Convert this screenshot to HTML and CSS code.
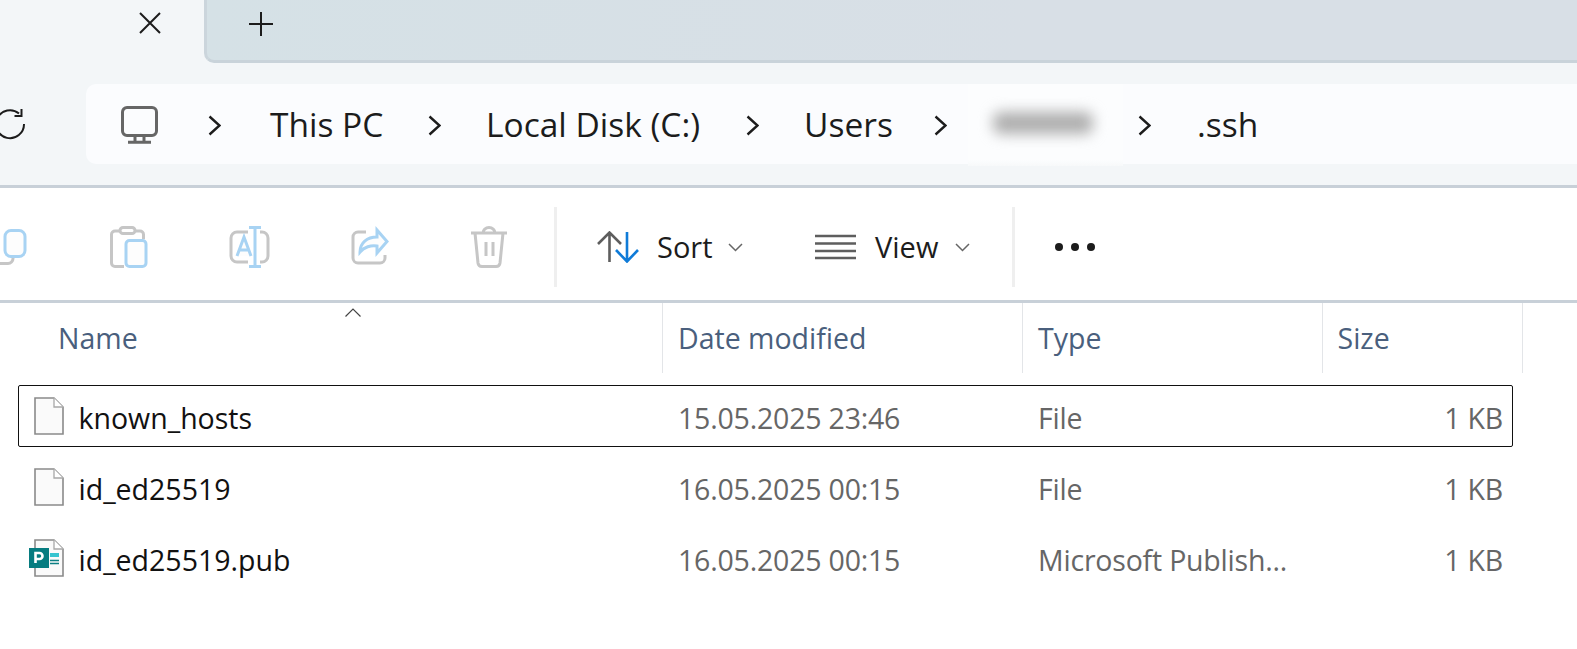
FILE: index.html
```html
<!DOCTYPE html>
<html lang="en">
<head>
<meta charset="utf-8">
<title>.ssh - File Explorer</title>
<link rel="stylesheet" href="styles.css">
</head>
<body>
<div class="window">
  <header class="tabbar">
    <div class="tab">
      <svg class="tab-close" width="22" height="22" viewBox="0 0 22 22"><path d="M1 1l20 20M21 1L1 21" class="ink"/></svg>
    </div>
    <div class="strip">
      <svg class="tab-new" width="24" height="24" viewBox="0 0 24 24"><path d="M0 12h24M12 0v24" class="ink"/></svg>
    </div>
  </header>

  <nav class="addressrow">
    <svg class="refresh" width="30" height="32" viewBox="0 0 30 32"><path d="M27 16A14 14 0 1 1 22 5.500M24.500 1v7h-7" class="ink"/></svg>
    <div class="address">
      <svg width="37" height="38" viewBox="0 0 37 38"><path d="M6 1.500h25a4.500 4.500 0 0 1 4.500 4.500v19a4.500 4.500 0 0 1-4.500 4.500H6A4.500 4.500 0 0 1 1.500 25V6A4.500 4.500 0 0 1 6 1.500zM14 30v6M23 30v6M7 36.200h23" class="monitor"/></svg>
      <svg class="chev" width="13" height="21" viewBox="0 0 13 21"><path d="M1.500 1.500l10 9-10 9" class="ink-bold"/></svg>
      <span class="crumb">This PC</span>
      <svg class="chev" width="13" height="21" viewBox="0 0 13 21"><path d="M1.500 1.500l10 9-10 9" class="ink-bold"/></svg>
      <span class="crumb">Local Disk (C:)</span>
      <svg class="chev" width="13" height="21" viewBox="0 0 13 21"><path d="M1.500 1.500l10 9-10 9" class="ink-bold"/></svg>
      <span class="crumb">Users</span>
      <svg class="chev" width="13" height="21" viewBox="0 0 13 21"><path d="M1.500 1.500l10 9-10 9" class="ink-bold"/></svg>
      <div class="redacted"><div class="smudge"></div></div>
      <svg class="chev" width="13" height="21" viewBox="0 0 13 21"><path d="M1.500 1.500l10 9-10 9" class="ink-bold"/></svg>
      <span class="crumb">.ssh</span>
    </div>
  </nav>

  <div class="toolbar">
    <svg class="tool tool-copy" width="27" height="36" viewBox="0 0 27 36"><path d="M13 27.500v2a5 5 0 0 1-5 5H-6" class="dim"/><rect x="5" y="1.500" width="20" height="26" rx="6" class="dimblue"/></svg>
    <svg class="tool tool-paste" width="38" height="42" viewBox="0 0 38 42"><path d="M10 5H5a3.500 3.500 0 0 0-3.500 3.500V37A3.500 3.500 0 0 0 5 40.500h9M26 5h4a3.500 3.500 0 0 1 3.500 3.500V13" class="dim"/><rect x="10" y="1.500" width="15" height="6" rx="3" class="dim"/><rect x="16" y="14.500" width="20" height="26" rx="3.500" class="dimblue"/></svg>
    <svg class="tool tool-rename" width="41" height="42" viewBox="0 0 41 42"><path d="M19 6H8a6 6 0 0 0-6 6v18a6 6 0 0 0 6 6h11M31 6h2a6 6 0 0 1 6 6v18a6 6 0 0 1-6 6h-2" class="dim"/><path d="M20 1.500h12M20 40.500h12M26 1.500v39M8 30L15 11l7 19M10.500 24h9" class="dimblue"/></svg>
    <svg class="tool tool-share" width="38" height="37" viewBox="0 0 38 37"><path d="M15 4H7a5 5 0 0 0-5 5v21a5 5 0 0 0 5 5h22a5 5 0 0 0 5-5v-3" class="dim"/><path d="M26 2l10 11.500L26 25v-7c-6-1-13 1-17 6 0-9 7-15 17-15z" class="dimblue"/></svg>
    <svg class="tool tool-trash" width="38" height="42" viewBox="0 0 38 42"><path d="M1 7h36M13 7a6 5.500 0 0 1 12 0M5 7l3 30a4 4 0 0 0 4 3.500h14a4 4 0 0 0 4-3.500l3-30M16 16v14M23 16v14" class="dim"/></svg>
    <div class="sep"></div>
    <svg class="sort-icon" width="44" height="32" viewBox="0 0 44 32"><path d="M12.500 31V2M1 13L12.500 1.500 24 13" class="gray"/><path d="M30 1v29M19 19l11 11.500L41 19" class="blue"/></svg>
    <span class="tool-label label-sort">Sort</span>
    <svg class="caret" width="15" height="9" viewBox="0 0 15 9"><path d="M1 1l6.500 6.500L14 1" class="gray-thin"/></svg>
    <svg class="view-icon" width="41" height="26" viewBox="0 0 41 26"><path d="M0 2h41M0 9.500h41M0 17h41M0 24h41" class="gray"/></svg>
    <span class="tool-label label-view">View</span>
    <svg class="caret" width="15" height="9" viewBox="0 0 15 9"><path d="M1 1l6.500 6.500L14 1" class="gray-thin"/></svg>
    <div class="sep sep-2"></div>
    <svg class="dots" width="40" height="8" viewBox="0 0 40 8"><circle cx="4" cy="4" r="4"/><circle cx="20" cy="4" r="4"/><circle cx="36" cy="4" r="4"/></svg>
  </div>

  <section class="list">
    <div class="columns">
      <svg class="sort-mark" width="16" height="9" viewBox="0 0 16 9"><path d="M.5 8.500L8 1l7.500 7.500" class="mark"/></svg>
      <div class="col col-name">Name</div>
      <div class="col">Date modified</div>
      <div class="col">Type</div>
      <div class="col">Size</div>
    </div>

    <div class="rows">
      <div class="row row-focus">
        <svg class="file" width="30" height="38" viewBox="0 0 30 38"><path d="M1 1h19l9 9v27H1z" class="page"/><path d="M20 1v9h9" class="fold"/></svg>
        <span class="fname">known_hosts</span>
        <span class="meta">15.05.2025 23:46</span>
        <span class="meta">File</span>
        <span class="meta size">1 KB</span>
      </div>
      <div class="row">
        <svg class="file" width="30" height="38" viewBox="0 0 30 38"><path d="M1 1h19l9 9v27H1z" class="page"/><path d="M20 1v9h9" class="fold"/></svg>
        <span class="fname">id_ed25519</span>
        <span class="meta">16.05.2025 00:15</span>
        <span class="meta">File</span>
        <span class="meta size">1 KB</span>
      </div>
      <div class="row">
        <svg class="file file-pub" width="35" height="38" viewBox="0 0 35 38"><path d="M6 1h19l9 9v27H6z" class="page"/><path d="M25 1v9h9" class="fold"/><rect x="21" y="14" width="9" height="4" class="pub-a"/><path d="M21 21.500h9M21 24.500h9" class="pub-b"/><rect x="0" y="9" width="20" height="20" class="pub-c"/><path d="M6.500 24V14h4a3 3 0 0 1 0 6h-4" class="pub-p"/></svg>
        <span class="fname">id_ed25519.pub</span>
        <span class="meta">16.05.2025 00:15</span>
        <span class="meta">Microsoft Publish...</span>
        <span class="meta size">1 KB</span>
      </div>
    </div>
  </section>
</div>
</body>
</html>
```
FILE: styles.css
```css
* { box-sizing: border-box; }
html, body { margin: 0; height: 100%; background: #fff; overflow: hidden; }
body { font-family: "Open Sans", "Noto Sans", sans-serif; color: #1a1a1a; }
.window { width: 1577px; height: 649px; overflow: hidden; }

svg { display: block; fill: none; }
.ink { stroke: #1c1c1c; stroke-width: 2; fill: none; }
.ink-bold { stroke: #1c1c1c; stroke-width: 2.4; fill: none; }
.monitor { stroke: #666; stroke-width: 3; fill: none; }
.dim { stroke: #c6c6c6; stroke-width: 3; fill: none; }
.dimblue { stroke: #a8d3f3; stroke-width: 3; fill: #fdfdfd; }
.gray { stroke: #5e5e5e; stroke-width: 2.6; fill: none; }
.blue { stroke: #0f7bd8; stroke-width: 2.6; fill: none; }
.gray-thin { stroke: #666; stroke-width: 1.5; fill: none; }
.mark { stroke: #444; stroke-width: 1.2; fill: none; }

/* Tab strip */
.tabbar { display: flex; height: 63px; background: #f3f6f8; }
.tab { width: 204px; padding: 12px 0 0 139px; flex: none; }
.strip {
  flex: 1;
  padding: 12px 0 0 42px;
  background: linear-gradient(100deg, #d5e1e6, #d8dfe6 60%);
  border-left: 3px solid #cbd5dc;
  border-bottom: 3px solid #c9d3da;
  border-bottom-left-radius: 10px;
}

/* Address row */
.addressrow {
  display: flex;
  align-items: center;
  height: 125px;
  background: #f3f6f8;
  border-bottom: 3px solid #c8d0d8;
}
.refresh { flex: none; margin-left: -3px; width: 30px; margin-right: 59px; }
.address {
  flex: 1;
  height: 80px;
  background: #fbfcfe;
  border-radius: 10px 0 0 10px;
  display: grid;
  grid-template-columns: 87px 62px 158px 58px 260px 58px 130px 34px 170px 59px 1fr;
  align-items: center;
  padding: 0 0 4px 35px;
}
.crumb { font-size: 33.500px; line-height: 44px; color: #1c1c1c; white-space: nowrap; margin-bottom: 2px; }
.redacted {
  align-self: start;
  height: 82px;
  width: 155px;
  background: linear-gradient(#fcfdfe 92%, #f7f9fa);
  display: flex;
  align-items: center;
  justify-content: center;
  padding: 0 6px 4px 0;
}
.smudge { width: 100px; height: 22px; background: #aeaeae; filter: blur(7px); border-radius: 8px; }

/* Command bar */
.toolbar {
  display: flex;
  align-items: center;
  height: 115px;
  border-bottom: 3px solid #c8d0d8;
  background: #fff;
  padding-top: 5px;
}
.tool { flex: none; overflow: visible; }
.tool-copy { margin-right: 83px; }
.tool-paste { margin-right: 81px; }
.tool-rename { margin-right: 81px; }
.tool-share { margin-right: 81px; }
.tool-trash { margin-right: 46px; }
.sep { width: 3px; height: 80px; background: #efefef; flex: none; }
.sep-2 { margin-left: 42px; margin-right: 40px; }
.sort-icon { margin-left: 40px; margin-right: 16px; flex: none; }
.tool-label { font-size: 29px; line-height: 40px; color: #1c1c1c; flex: none; }
.label-sort { width: 71px; }
.label-view { width: 80px; }
.caret { flex: none; margin-top: 2px; }
.view-icon { flex: none; margin-left: 72px; margin-right: 19px; }
.dots { fill: #1c1c1c; flex: none; }
.dots circle { fill: #1c1c1c; }

/* Details list */
.list { position: relative; }
.columns {
  display: grid;
  grid-template-columns: 663px 360px 299.500px 200px;
  height: 65px;
}
.col {
  font-size: 28.500px;
  line-height: 70px;
  color: #4a5f7d;
  padding-left: 15px;
  border-right: 1px solid #e3e5e8;
}
.col-name { padding-left: 58px; }
.sort-mark { position: absolute; left: 345px; top: 5px; }

.rows { display: grid; row-gap: 9px; padding: 17px 0 0 18px; }
.row {
  display: grid;
  grid-template-columns: 59.500px 599.500px 360px 261px 1fr;
  width: 1495px;
  height: 62px;
  padding-right: 9px;
  align-items: center;
  border: 1.500px solid transparent;
  border-radius: 2px;
  font-size: 28.500px;
}
.row-focus { border-color: #111; }
.file { margin-left: 15px; }
.file-pub { margin-left: 10px; }
.page { fill: #fafafa; stroke: #8a8a8a; stroke-width: 1.600; }
.fold { fill: #fff; stroke: #a8a8a8; stroke-width: 1.300; }
.pub-a { fill: #36c4cf; }
.pub-b { stroke: #0c7f83; stroke-width: 1.300; }
.pub-c { fill: #077c80; }
.pub-p { stroke: #fff; stroke-width: 2.600; }
.fname { color: #111; white-space: nowrap; padding-top: 4px; }
.meta { color: #666; white-space: nowrap; padding-top: 4px; letter-spacing: -.2px; }
.size { text-align: right; }
```
